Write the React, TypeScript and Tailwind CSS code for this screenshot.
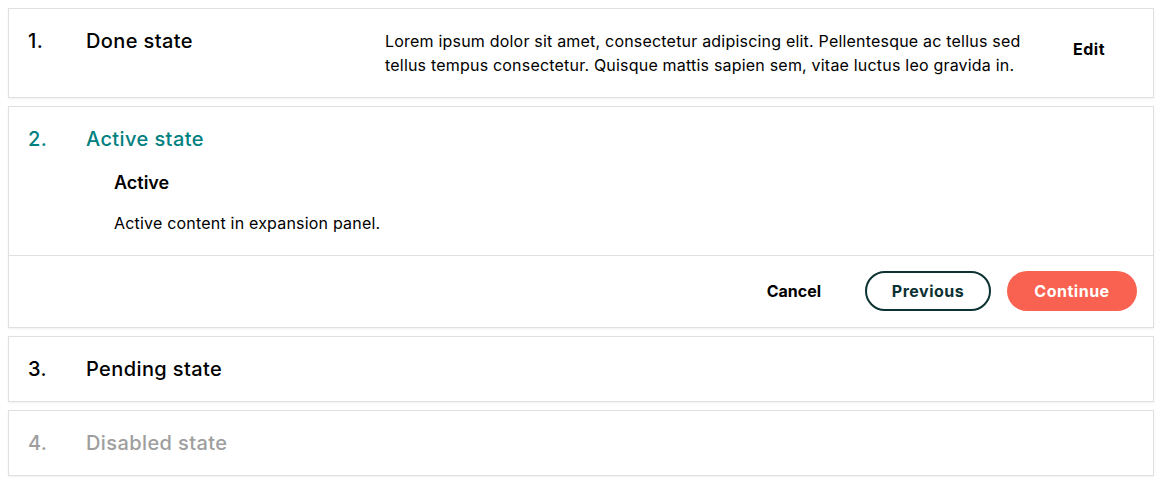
export default function App() {
  return (
    <div className="min-h-screen bg-white px-2 pt-2 font-['Inter',sans-serif] text-black">
      <div className="flex flex-col gap-2">
        {/* done */}
        <div className="flex border border-[#e0e0e0] bg-white py-5 pl-[19px] pr-5 shadow-[0_1px_2px_rgba(0,0,0,0.06)]">
          <div className="w-[58px] text-[20px] leading-6 font-medium tracking-[0.4px]">1.</div>
          <div className="w-[299px] text-[20px] leading-6 font-medium tracking-[0.4px]">Done state</div>
          <p className="w-[660px] text-[16px] leading-6 tracking-[0.2px]">
            Lorem ipsum dolor sit amet, consectetur adipiscing elit. Pellentesque ac tellus sed tellus tempus
            consectetur. Quisque mattis sapien sem, vitae luctus leo gravida in.
          </p>
          <div className="flex-1 pt-2 text-right">
            <button className="mr-7 text-[16px] leading-6 font-bold tracking-[0.5px]">Edit</button>
          </div>
        </div>

        {/* active */}
        <div className="border border-[#e0e0e0] bg-white shadow-[0_1px_2px_rgba(0,0,0,0.06)]">
          <div className="py-5 pl-[19px] pr-5">
            <div className="flex text-[20px] leading-6 font-medium tracking-[0.4px] text-[#00807f]">
              <div className="w-[58px]">2.</div>
              <div>Active state</div>
            </div>
            <div className="pl-[86px]">
              <h3 className="mt-5 text-[18px] leading-6 font-semibold">Active</h3>
              <p className="mt-4 text-[16px] leading-6 tracking-[0.2px]">Active content in expansion panel.</p>
            </div>
          </div>
          <div className="flex items-center justify-end border-t border-[#e0e0e0] pt-[15px] pr-4 pb-4">
            <button className="mr-[44px] text-[16px] font-bold">Cancel</button>
            <button className="mr-4 h-10 w-[126px] rounded-full border-2 border-[#0c3132] text-[16px] font-bold tracking-[0.5px] text-[#0c3132]">
              Previous
            </button>
            <button className="h-10 w-[130px] rounded-full bg-[#f96250] text-[16px] font-bold tracking-[0.5px] text-white">
              Continue
            </button>
          </div>
        </div>

        {/* pending */}
        <div className="flex border border-[#e0e0e0] bg-white py-5 pl-[19px] pr-5 text-[20px] leading-6 font-medium tracking-[0.4px] shadow-[0_1px_2px_rgba(0,0,0,0.06)]">
          <div className="w-[58px]">3.</div>
          <div>Pending state</div>
        </div>

        {/* disabled */}
        <div className="flex border border-[#e0e0e0] bg-white py-5 pl-[19px] pr-5 text-[20px] leading-6 font-medium tracking-[0.4px] text-[#9e9e9e] shadow-[0_1px_2px_rgba(0,0,0,0.06)]">
          <div className="w-[58px]">4.</div>
          <div>Disabled state</div>
        </div>
      </div>
    </div>
  );
}
